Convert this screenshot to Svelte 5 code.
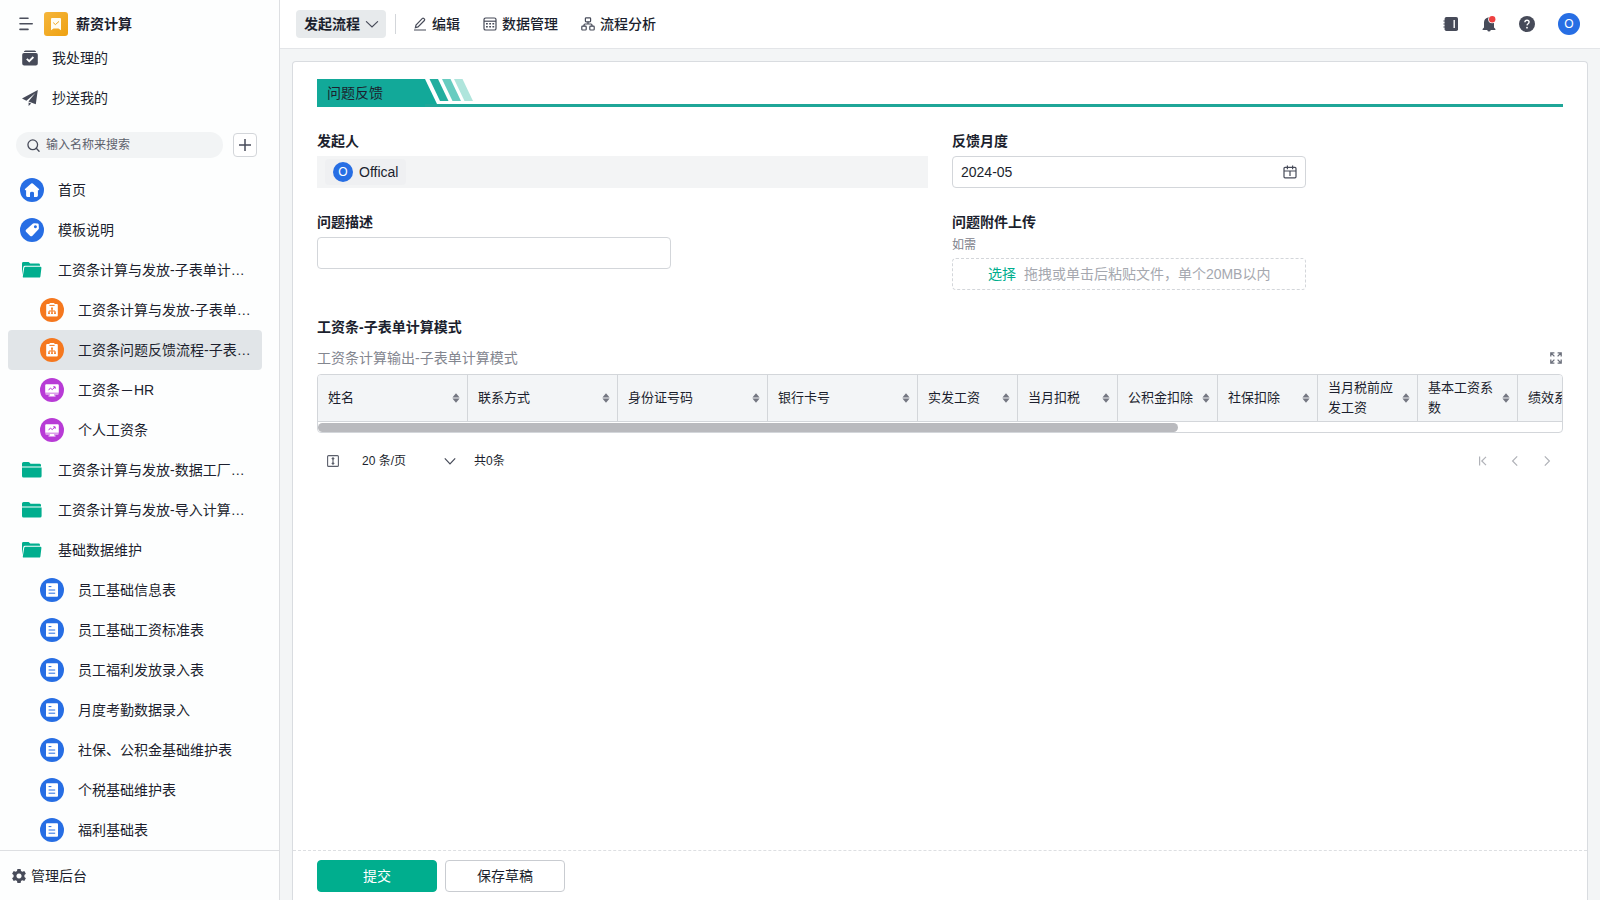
<script lang="ts">
  type NavItem = { name: string; icon: string; child?: boolean };

  const navItems: NavItem[] = [
    { name: '首页', icon: 'home' },
    { name: '模板说明', icon: 'tag' },
    { name: '工资条计算与发放-子表单计算模式', icon: 'folder-open' },
    { name: '工资条计算与发放-子表单计算', icon: 'flow', child: true },
    { name: '工资条问题反馈流程-子表单计算', icon: 'flow', child: true },
    { name: '工资条－HR', icon: 'board', child: true },
    { name: '个人工资条', icon: 'board', child: true },
    { name: '工资条计算与发放-数据工厂模式', icon: 'folder' },
    { name: '工资条计算与发放-导入计算模式', icon: 'folder' },
    { name: '基础数据维护', icon: 'folder-open' },
    { name: '员工基础信息表', icon: 'form', child: true },
    { name: '员工基础工资标准表', icon: 'form', child: true },
    { name: '员工福利发放录入表', icon: 'form', child: true },
    { name: '月度考勤数据录入', icon: 'form', child: true },
    { name: '社保、公积金基础维护表', icon: 'form', child: true },
    { name: '个税基础维护表', icon: 'form', child: true },
    { name: '福利基础表', icon: 'form', child: true },
  ];

  const columns = [
    { name: '姓名', width: 150 },
    { name: '联系方式', width: 150 },
    { name: '身份证号码', width: 150 },
    { name: '银行卡号', width: 150 },
    { name: '实发工资', width: 100 },
    { name: '当月扣税', width: 100 },
    { name: '公积金扣除', width: 100 },
    { name: '社保扣除', width: 100 },
    { name: '当月税前应发工资', width: 100 },
    { name: '基本工资系数', width: 100 },
    { name: '绩效系数', width: 100 },
  ];
  const tableWidth = 1800;

  let selected = 4;
  let keyword = '';
  let month = '2024-05';
  let description = '';
  let pageSize = '20';
  let viewWidth = 1244;
  $: thumbWidth = Math.min(100, (viewWidth / tableWidth) * 100);
</script>

{#snippet navIcon(icon: string)}
  {#if icon === 'folder'}
    <svg class="folder" width="20" height="18" viewBox="0 0 20 18" aria-hidden="true">
      <path d="M0 5.4V2.6Q0 1 1.6 1H6.4Q7.2 1 7.7 1.7L8.5 2.8H17.6Q19 2.8 19 4.2V5.4Z" />
      <path d="M0 6.4H19.6V15Q19.6 16.6 18 16.6H1.6Q0 16.6 0 15Z" />
    </svg>
  {:else if icon === 'folder-open'}
    <svg class="folder" width="20" height="18" viewBox="0 0 20 18" aria-hidden="true">
      <path d="M0 14V2.4Q0 1 1.4 1H6.6L8.2 2.6H16.6Q18 2.6 18 4V4.8H3Q1.6 4.8 1.3 6.2Z" />
      <path d="M3.4 5.8H18.4Q19.6 5.8 19.4 7L18.4 15.4Q18.2 16.6 17 16.6H1.8Q.6 16.6 .8 15.4L2.2 7Q2.4 5.8 3.4 5.8Z" />
    </svg>
  {:else}
    <svg class="round {icon}" width="24" height="24" viewBox="0 0 24 24" aria-hidden="true">
      <circle cx="12" cy="12" r="12" />
      {#if icon === 'home'}
        <path fill="#fff" d="M11.2 5.5Q12 4.9 12.8 5.5L19 11Q19.6 12.2 18.4 12.2H17.9V17.6Q17.9 18.9 16.6 18.9H14V15Q14 13.7 12 13.7T10 15V18.9H7.4Q6.1 18.9 6.1 17.6V12.2H5.6Q4.4 12.2 5 11Z" />
      {:else if icon === 'tag'}
        <path fill="#fff" fill-rule="evenodd" d="M12.7 5.8Q13.2 5.2 14 5.2L17.6 5.4Q18.7 5.4 18.7 6.5L18.9 10.2Q18.9 11 18.3 11.5L12.2 17.9Q11.2 18.8 10.2 17.9L6 13.8Q5.1 12.8 6 11.8ZM15.4 7.3A1.5 1.5 0 1 0 15.41 7.3Z" />
      {:else if icon === 'flow'}
        <path fill="#fff" d="M7.2 6H16.8Q17.8 6 17.8 7V17.6Q17.8 18.6 16.8 18.6H7.2Q6.2 18.6 6.2 17.6V7Q6.2 6 7.2 6ZM9.6 5H14.4V6.4H9.6Z" />
        <path class="ink thin" d="M9.4 7.4H14.6M12 11V15M9 15V13H15V15" />
        <path d="M11.1 9.6H12.9V11.4H11.1ZM8.1 14.4H9.9V16H8.1ZM11.1 14.4H12.9V16H11.1ZM14.1 14.4H15.9V16H14.1Z" />
      {:else if icon === 'board'}
        <path fill="#fff" d="M6.3 6.2H17.7Q18.8 6.2 18.8 7.3V14.8H5.2V7.3Q5.2 6.2 6.3 6.2ZM5.2 15.4H18.8Q18.8 16.4 17.7 16.4H14L14.4 17.6H15.5V18.6H8.5V17.6H9.6L10 16.4H6.3Q5.2 16.4 5.2 15.4Z" />
        <path class="ink thin" d="M8.6 12.2L10.4 10L12.2 11.6L15 9M13.2 8.8H15.2V10.8" />
      {:else}
        <rect x="6" y="5.2" width="12" height="13.6" rx="1" fill="#fff" />
        <path class="ink thin" d="M8.6 8.6H11.4M8.6 12H15.2M8.6 15.2H15.2" />
      {/if}
    </svg>
  {/if}
{/snippet}

<div class="app">
  <aside class="sidebar">
    <div class="brand">
      <button class="plain" aria-label="收起菜单">
        <svg width="16" height="16" viewBox="0 0 16 16" fill="none" stroke="#4b4f5c" stroke-width="1.6" stroke-linecap="round">
          <path d="M2 2.2H10M2 7.8H14.2M2 13.4H10" />
        </svg>
      </button>
      <svg class="logo" width="24" height="24" viewBox="0 0 24 24" aria-hidden="true">
        <defs>
          <linearGradient id="gold" x1="0" y1="0" x2="1" y2="1">
            <stop offset="0" stop-color="#f5b63c" />
            <stop offset="1" stop-color="#eea111" />
          </linearGradient>
        </defs>
        <rect width="24" height="24" rx="3" fill="url(#gold)" />
        <path fill="#fffdf2" d="M7 7Q7 6 8 6H16Q17 6 17 7V18.2L14.5 16.6H9.5L7 18.2Z" />
        <path d="M9.2 10.6L11.4 12.6L15 9.4" fill="none" stroke="#f0a81e" stroke-width="1" />
      </svg>
      <strong>薪资计算</strong>
    </div>

    <nav class="tasks">
      <a href="#done">
        <svg width="16" height="16" viewBox="0 0 16 16" aria-hidden="true">
          <path fill="#474b59" d="M3.4.5H12.6Q13.8.5 14.2 2H1.8Q2.2.5 3.4.5ZM2 2.9H14Q15.8 2.9 15.8 4.7V13.4Q15.8 15.4 13.8 15.4H2.2Q.2 15.4 .2 13.4V4.7Q.2 2.9 2 2.9Z" />
          <path d="M4.8 8.8L7.2 11.2L11.4 7" fill="none" stroke="#fff" stroke-width="1.8" />
        </svg>
        我处理的
      </a>
      <a href="#cc">
        <svg width="16" height="16" viewBox="0 0 16 16" aria-hidden="true">
          <path fill="#474b59" d="M15.8 0L0 8.4L4.4 10.8L13.4 3L6.4 11.6L13.8 14.2ZM6.6 12.6V16L9.2 13.6Z" />
        </svg>
        抄送我的
      </a>
    </nav>

    <div class="search-row">
      <label class="search">
        <svg width="13" height="13" viewBox="0 0 14 14" fill="none" stroke="#474b59" stroke-width="1.4" stroke-linecap="round">
          <circle cx="6.2" cy="6.2" r="5.2" />
          <path d="M10 10L13 13.2" />
        </svg>
        <input type="text" placeholder="输入名称来搜索" aria-label="搜索" bind:value={keyword} />
      </label>
      <button class="add" aria-label="新建">
        <svg width="12" height="12" viewBox="0 0 12 12" stroke="#474b59" stroke-width="1.5"><path d="M6 0V12M0 6H12" /></svg>
      </button>
    </div>

    <nav class="menu">
      {#each navItems as item, i}
        <a
          href="#{i}"
          class:child={item.child}
          data-selected={selected === i}
          on:click|preventDefault={() => (selected = i)}
        >
          <span class="nav-icon">{@render navIcon(item.icon)}</span>
          <span class="nav-name">{item.name}</span>
        </a>
      {/each}
    </nav>

    <a class="admin" href="#admin">
      <svg width="14" height="14" viewBox="0 0 14 14" aria-hidden="true">
        <path fill="#474b59" fill-rule="evenodd" d="M5.4 0H8.6L9 1.9L10.4 2.7L12.3 2L13.9 4.8L12.4 6.1V7.9L13.9 9.2L12.3 12L10.4 11.3L9 12.1L8.6 14H5.4L5 12.1L3.6 11.3L1.7 12L.1 9.2L1.6 7.9V6.1L.1 4.8L1.7 2L3.6 2.7L5 1.9ZM7 4.4A2.6 2.6 0 1 0 7.01 4.4Z" />
      </svg>
      管理后台
    </a>
  </aside>

  <div class="main">
    <header class="topbar">
      <button class="start">
        发起流程
        <svg width="14" height="14" viewBox="0 0 14 14" fill="none" stroke="#474b59" stroke-width="1.2" stroke-linecap="round"><path d="M1.4 4.6L7 10L12.6 4.6" /></svg>
      </button>
      <span class="divider"></span>
      <button class="tool">
        <svg width="14" height="14" viewBox="0 0 14 14" fill="none" stroke="#474b59" stroke-width="1.2">
          <path d="M1 13H13M2.4 10.6L3 8L9.4 1.4Q10 .9 10.7 1.4L11.5 2.2Q12 2.9 11.4 3.5L5 9.9Z" />
        </svg>
        编辑
      </button>
      <button class="tool">
        <svg width="14" height="14" viewBox="0 0 14 14" fill="none" stroke="#474b59" stroke-width="1.2">
          <rect x="1" y="1" width="12" height="12" rx="1.6" />
          <path d="M1 4.2H13" />
          <path d="M3 6.8H11.2M3 9.8H11.2" stroke-width="1.6" stroke-dasharray="1.8 1.4" />
        </svg>
        数据管理
      </button>
      <button class="tool">
        <svg width="14" height="14" viewBox="0 0 14 14" fill="none" stroke="#474b59" stroke-width="1.2">
          <rect x="4.4" y=".8" width="5.2" height="4" rx=".8" />
          <rect x=".8" y="9.2" width="4.4" height="3.8" rx=".8" />
          <rect x="8.8" y="9.2" width="4.4" height="3.8" rx=".8" />
          <path d="M7 4.8V7M3 9.2V8Q3 7 4 7H10Q11 7 11 8V9.2" />
        </svg>
        流程分析
      </button>

      <div class="actions">
        <button class="plain" aria-label="通讯录">
          <svg width="16" height="16" viewBox="0 0 16 16">
            <path fill="#474b59" d="M3.4 1H13.2Q15 1 15 2.8V13.2Q15 15 13.2 15H3.4Q1.6 15 1.6 13.2V2.8Q1.6 1 3.4 1Z" />
            <path d="M.4 5H3M.4 8H3M.4 11H3" stroke="#474b59" stroke-width="1.2" />
            <path d="M11.2 4V12" stroke="#fff" stroke-width="1.4" />
          </svg>
        </button>
        <button class="plain" aria-label="消息">
          <svg width="16" height="18" viewBox="0 0 16 18">
            <path fill="#474b59" d="M7 2.4Q8 1.4 9 2.4Q13 3.4 13 7.4V12.4L14.4 14V15H9.8Q9.4 16.6 8 16.6T6.2 15H1.6V14L3 12.4V7.4Q3 3.4 7 2.4Z" />
            <circle cx="11.2" cy="4.2" r="4" fill="#fff" />
            <circle cx="11.2" cy="4.2" r="3.2" fill="#ee4040" />
          </svg>
        </button>
        <button class="plain" aria-label="帮助">
          <svg width="16" height="16" viewBox="0 0 16 16">
            <circle cx="8" cy="8" r="8" fill="#474b59" />
            <path d="M5.9 6.3Q5.9 4.2 8 4.2T10.1 6.1Q10.1 7 9.1 7.7T8 9.4" fill="none" stroke="#fff" stroke-width="1.4" />
            <circle cx="8" cy="11.7" r=".9" fill="#fff" />
          </svg>
        </button>
        <button class="plain avatar large">O</button>
      </div>
    </header>

    <form class="card" on:submit|preventDefault>
      <div class="content">
        <div class="banner">
          <h2>问题反馈</h2>
          <svg width="48" height="25" viewBox="0 0 48 25" aria-hidden="true">
            <path fill="#12a999" d="M0 0L12 25H0Z" />
            <path fill="#22ae9f" d="M4.5 0H13L23.5 22H15Z" />
            <path fill="#67ccc0" d="M17 0H25.5L36 22H27.5Z" />
            <path fill="#afe5dc" d="M29 0H37.5L48 22H39.5Z" />
          </svg>
        </div>

        <div class="fields">
          <div class="field">
            <div class="label">发起人</div>
            <div class="members">
              <span class="member"><span class="avatar">O</span>Offical</span>
            </div>
          </div>
          <div class="field">
            <label class="label" for="month">反馈月度</label>
            <div class="box">
              <input id="month" type="text" bind:value={month} />
              <svg width="14" height="14" viewBox="0 0 14 14" fill="none" stroke="#474b59" stroke-width="1.2">
                <rect x="1" y="2.4" width="12" height="10.4" rx="1" />
                <path d="M1 6H13M4.4 .6V4.2M9.6 .6V4.2M7 6V11" />
              </svg>
            </div>
          </div>
          <div class="field">
            <label class="label" for="description">问题描述</label>
            <div class="box"><input id="description" type="text" bind:value={description} /></div>
          </div>
          <div class="field">
            <label class="label" for="files">问题附件上传</label>
            <p class="hint">如需</p>
            <label class="upload">
              <input id="files" type="file" multiple />
              <span class="pick">选择</span>
              <span>拖拽或单击后粘贴文件，单个20MB以内</span>
            </label>
          </div>
        </div>

        <section>
          <h3 class="label">工资条-子表单计算模式</h3>
          <div class="caption">
            <span>工资条计算输出-子表单计算模式</span>
            <button type="button" class="plain" aria-label="全屏">
              <svg width="14" height="14" viewBox="0 0 14 14" fill="none" stroke="#6b6f7b" stroke-width="1.3">
                <path d="M1.8 5.4V1.8H5.4M8.6 1.8H12.2V5.4M12.2 8.6V12.2H8.6M5.4 12.2H1.8V8.6M1.8 1.8L5.4 5.4M12.2 1.8L8.6 5.4M12.2 12.2L8.6 8.6M1.8 12.2L5.4 8.6" />
              </svg>
            </button>
          </div>
          <div class="table-wrapper" bind:clientWidth={viewWidth}>
            <table style="width: {tableWidth}px">
              <thead>
                <tr>
                  {#each columns as { name, width }}
                    <th style="width: {width}px">
                      <div class="cell">
                        <span>{name}</span>
                        <button type="button" class="plain" aria-label="按{name}排序">
                          <svg width="8" height="10" viewBox="0 0 8 10" fill="#747782">
                            <path d="M4 .2L7.6 4.5H.4ZM4 9.8L7.6 5.5H.4Z" />
                          </svg>
                        </button>
                      </div>
                    </th>
                  {/each}
                  <th></th>
                </tr>
              </thead>
            </table>
            <div class="track"><div class="thumb" style="width: {thumbWidth}%"></div></div>
          </div>

          <div class="pager">
            <button type="button" class="plain" aria-label="行高">
              <svg width="12" height="12" viewBox="0 0 12 12" fill="none" stroke="#5b5f6b" stroke-width="1.1">
                <rect x=".6" y=".6" width="10.8" height="10.8" rx="1" />
                <path d="M6 3V9M4.8 4L6 2.8L7.2 4M4.8 8L6 9.2L7.2 8" />
              </svg>
            </button>
            <span class="size">
              <select aria-label="每页条数" bind:value={pageSize}>
                <option value="20">20 条/页</option>
                <option value="50">50 条/页</option>
                <option value="100">100 条/页</option>
              </select>
              <svg width="12" height="12" viewBox="0 0 12 12" fill="none" stroke="#474b59" stroke-width="1.2"><path d="M.8 3.4L6 8.8L11.2 3.4" /></svg>
            </span>
            <span>共0条</span>
            <div class="pages">
              <button type="button" class="plain" aria-label="首页" disabled>
                <svg width="10" height="10" viewBox="0 0 10 10"><path d="M1.6 .6V9.4M8 .8L3.8 5L8 9.2" /></svg>
              </button>
              <button type="button" class="plain" aria-label="上一页" disabled>
                <svg width="10" height="10" viewBox="0 0 10 10"><path d="M7.2 .4L2.6 5L7.2 9.6" /></svg>
              </button>
              <button type="button" class="plain" aria-label="下一页" disabled>
                <svg width="10" height="10" viewBox="0 0 10 10"><path d="M2.8 .4L7.4 5L2.8 9.6" /></svg>
              </button>
            </div>
          </div>
        </section>
      </div>

      <footer>
        <button class="primary">提交</button>
        <button type="button">保存草稿</button>
      </footer>
    </form>
  </div>
</div>

<style>
  :global(body) {
    margin: 0;
  }
  .app {
    --green: #00ae8e;
    --blue: #276ee4;
    --text: #1c1f2e;
    --line: #d3d6da;
    display: flex;
    height: 100vh;
    overflow: hidden;
    color: var(--text);
    font: 14px/20px 'Liberation Sans', 'Noto Sans CJK SC', sans-serif;
  }
  .app * {
    box-sizing: border-box;
  }
  button,
  input,
  select {
    font: inherit;
    color: inherit;
  }
  button {
    cursor: pointer;
  }
  a {
    color: inherit;
    text-decoration: none;
  }
  svg {
    display: block;
    flex: none;
  }
  .plain {
    display: flex;
    padding: 0;
    border: 0;
    background: none;
  }

  .sidebar {
    display: flex;
    flex: none;
    flex-direction: column;
    width: 280px;
    border-right: 1px solid #dddfe2;
    background: #fdfefe;
  }
  .brand {
    display: flex;
    align-items: center;
    height: 38px;
    padding: 10px 18px 0;
  }
  .logo {
    margin: 0 8px 0 10px;
  }
  .brand strong,
  .label,
  .start {
    font-weight: 700;
  }
  .tasks a {
    display: flex;
    align-items: center;
    gap: 14px;
    height: 40px;
    padding-left: 22px;
  }
  .search-row {
    display: flex;
    align-items: center;
    gap: 10px;
    padding: 14px 22px 12px 16px;
  }
  .search {
    display: flex;
    flex: 1;
    align-items: center;
    gap: 6px;
    height: 26px;
    padding: 0 12px 0 11px;
    border-radius: 13px;
    background: #f2f4f5;
  }
  .search input {
    width: 100%;
    padding: 0;
    border: 0;
    outline: 0;
    background: none;
    font-size: 12px;
  }
  .search input::placeholder {
    color: #5d616c;
  }
  .add {
    display: flex;
    align-items: center;
    justify-content: center;
    width: 24px;
    height: 24px;
    padding: 0;
    border: 1px solid var(--line);
    border-radius: 4px;
    background: #fff;
  }
  .menu {
    flex: 1;
    min-height: 0;
    padding: 0 17px 0 8px;
    overflow: hidden;
  }
  .menu a {
    display: flex;
    align-items: center;
    gap: 14px;
    height: 40px;
    padding: 0 8px 0 12px;
    border-radius: 4px;
  }
  .menu .child {
    padding-left: 32px;
  }
  .menu a[data-selected='true'] {
    background: #e1e5e8;
  }
  .nav-icon {
    display: flex;
    flex: none;
    justify-content: center;
    width: 24px;
  }
  .nav-name {
    overflow: hidden;
    text-overflow: ellipsis;
    white-space: nowrap;
  }
  .folder {
    fill: var(--green);
  }
  .round {
    color: var(--blue);
    fill: currentColor;
  }
  .round.flow {
    color: #f5781f;
  }
  .round.board {
    color: #b83bd6;
  }
  .ink {
    fill: none;
    stroke: currentColor;
    stroke-width: 1.2;
  }
  .ink.thin {
    stroke-width: 1;
  }
  .admin {
    display: flex;
    align-items: center;
    gap: 5px;
    height: 50px;
    padding-left: 12px;
    border-top: 1px solid #dddfe2;
  }

  .main {
    display: flex;
    flex: 1;
    flex-direction: column;
    min-width: 0;
    background: #f3f5f6;
  }
  .topbar {
    display: flex;
    flex: none;
    align-items: center;
    height: 49px;
    padding: 0 20px 0 16px;
    border-bottom: 1px solid #e3e5e8;
    background: #fff;
  }
  .start {
    display: flex;
    align-items: center;
    gap: 5px;
    height: 28px;
    padding: 0 7px 0 8px;
    border: 0;
    border-radius: 4px;
    background: #e7eaec;
  }
  .divider {
    width: 1px;
    height: 20px;
    margin: 0 17px 0 9px;
    background: var(--line);
  }
  .tool {
    display: flex;
    align-items: center;
    gap: 5px;
    margin-right: 23px;
    padding: 0;
    border: 0;
    background: none;
    font-weight: 500;
  }
  .actions {
    display: flex;
    align-items: center;
    gap: 22px;
    margin-left: auto;
  }
  .avatar {
    display: flex;
    align-items: center;
    justify-content: center;
    width: 20px;
    height: 20px;
    border-radius: 50%;
    background: var(--blue);
    color: #fff;
    font-size: 12px;
  }
  .avatar.large {
    width: 22px;
    height: 22px;
    margin-left: 1px;
  }

  .card {
    display: flex;
    flex: 1;
    flex-direction: column;
    min-height: 0;
    margin: 12px 12px 0;
    border: 1px solid #d9dce0;
    border-bottom: 0;
    border-radius: 4px 4px 0 0;
    background: #fff;
  }
  .content {
    flex: 1;
    min-height: 0;
    padding: 17px 24px 0;
    overflow: hidden;
  }
  .banner {
    display: flex;
    height: 28px;
    border-bottom: 3px solid #1fa698;
  }
  .banner h2 {
    width: 108px;
    height: 28px;
    margin: 0;
    padding-left: 10px;
    background: #12a999;
    font-size: 14px;
    font-weight: 400;
    line-height: 28px;
  }
  .fields {
    display: grid;
    grid-template-columns: 1fr 1fr;
    gap: 19px 24px;
    margin: 19px 0 22px;
  }
  .label {
    display: block;
    margin: 0;
    font-size: 14px;
    line-height: 30px;
  }
  .members {
    display: flex;
    align-items: center;
    height: 32px;
    padding: 0 8px;
    background: #f3f4f5;
  }
  .member {
    display: flex;
    align-items: center;
    gap: 6px;
    height: 26px;
    padding: 0 8px;
    border-radius: 4px;
    background: #eff0f2;
  }
  .box,
  .upload {
    display: flex;
    align-items: center;
    width: 58%;
    height: 32px;
    border: 1px solid var(--line);
    border-radius: 4px;
  }
  .box {
    padding: 0 8px;
  }
  .box input {
    flex: 1;
    min-width: 0;
    padding: 0;
    border: 0;
    outline: 0;
    background: none;
  }
  .hint {
    margin: 0 0 5px;
    color: #7e828c;
    font-size: 12px;
    line-height: 16px;
  }
  .upload {
    justify-content: center;
    gap: 8px;
    border-style: dashed;
    color: #a5a8af;
    white-space: nowrap;
    cursor: pointer;
  }
  .upload input {
    position: absolute;
    width: 1px;
    height: 1px;
    opacity: 0;
  }
  .pick {
    color: var(--green);
  }

  .caption {
    display: flex;
    align-items: center;
    justify-content: space-between;
    height: 32px;
    color: #83868f;
  }
  .table-wrapper {
    border: 1px solid var(--line);
    border-radius: 4px;
    overflow: hidden;
  }
  table {
    table-layout: fixed;
    border-spacing: 0;
    font-size: 13px;
  }
  th {
    height: 47px;
    padding: 0 7px 0 10px;
    border: solid var(--line);
    border-width: 0 1px 1px 0;
    background: #f3f5f7;
    font-weight: 400;
    text-align: left;
  }
  .cell {
    display: flex;
    align-items: center;
    justify-content: space-between;
    gap: 4px;
  }
  .track {
    height: 10px;
    padding-top: 1px;
  }
  .thumb {
    height: 9px;
    border-radius: 5px;
    background: #b9babe;
  }
  .pager {
    display: flex;
    align-items: center;
    height: 56px;
    padding: 0 11px 0 10px;
    font-size: 12px;
  }
  .size {
    display: flex;
    align-items: center;
    margin: 0 18px 0 23px;
  }
  .size select {
    width: 82px;
    padding: 0;
    border: 0;
    outline: 0;
    background: none;
    appearance: none;
  }
  .pages {
    display: flex;
    gap: 22px;
    margin-left: auto;
  }
  .pages path {
    fill: none;
    stroke: #b0b2b8;
    stroke-width: 1.2;
  }

  footer {
    display: flex;
    flex: none;
    align-items: center;
    gap: 8px;
    height: 50px;
    padding: 0 24px;
    border-top: 1px dashed #dddfe2;
  }
  footer button {
    width: 120px;
    height: 32px;
    border: 1px solid #c9ccd1;
    border-radius: 4px;
    background: #fff;
  }
  footer .primary {
    border-color: var(--green);
    background: var(--green);
    color: #fff;
  }
</style>
